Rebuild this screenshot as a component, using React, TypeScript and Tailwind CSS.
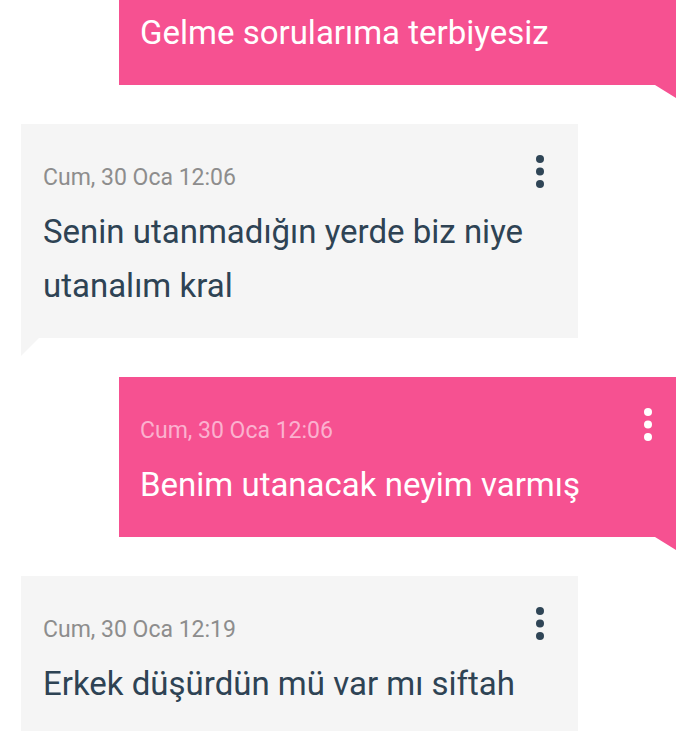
import clsx from "clsx"

type Message = {
  id: number
  mine: boolean
  time?: string
  text: string
}

// first bubble is scrolled partly out of view, so only its text shows
const messages: Message[] = [
  { id: 1, mine: true, text: "Gelme sorularıma terbiyesiz" },
  { id: 2, mine: false, time: "Cum, 30 Oca 12:06", text: "Senin utanmadığın yerde biz niye utanalım kral" },
  { id: 3, mine: true, time: "Cum, 30 Oca 12:06", text: "Benim utanacak neyim varmış" },
  { id: 4, mine: false, time: "Cum, 30 Oca 12:19", text: "Erkek düşürdün mü var mı siftah" },
]

function MoreDots({ light }: { light: boolean }) {
  return (
    <svg width="10" height="36" viewBox="0 0 10 36" className="mt-[3px] shrink-0">
      <circle cx="5" cy="5" r="4" fill={light ? "#ffffff" : "#2f4556"} />
      <circle cx="5" cy="17.5" r="4" fill={light ? "#ffffff" : "#2f4556"} />
      <circle cx="5" cy="30" r="4" fill={light ? "#ffffff" : "#2f4556"} />
    </svg>
  )
}

function Bubble({ msg }: { msg: Message }) {
  const mine = msg.mine
  return (
    <div
      className={clsx(
        "relative w-[557px] pb-[25px]",
        msg.time ? "pt-[27px]" : "pt-[6px]",
        mine ? "ml-auto mr-[14px] bg-[#f65191] pl-[21px] pr-[23px]" : "ml-[21px] bg-[#f5f5f5] pl-[22px] pr-[33px]"
      )}
    >
      {msg.time && (
        <div className="flex items-start justify-between">
          <span
            className={clsx(
              "text-[23px] leading-[54px]",
              mine ? "text-[#fbb1cf]" : "text-[#8d8d8d]"
            )}
          >
            {msg.time}
          </span>
          <MoreDots light={mine} />
        </div>
      )}
      <p className={clsx("text-[33px] leading-[54px]", mine ? "text-white" : "text-[#2e4354]")}>
        {msg.text}
      </p>
      {mine ? (
        <svg width="21" height="13" viewBox="0 0 21 13" className="absolute right-0 top-full">
          <polygon points="0,0 21,0 21,13" fill="#f65191" />
        </svg>
      ) : (
        <svg width="18" height="18" viewBox="0 0 18 18" className="absolute left-0 top-full">
          <polygon points="0,0 18,0 0,18" fill="#f5f5f5" />
        </svg>
      )}
    </div>
  )
}

export default function App() {
  return (
    <div className="h-[731px] w-[690px] overflow-hidden bg-white font-['Roboto',sans-serif]">
      <div className="flex flex-col gap-[39px]">
        {messages.map((m) => (
          <Bubble key={m.id} msg={m} />
        ))}
      </div>
    </div>
  )
}
